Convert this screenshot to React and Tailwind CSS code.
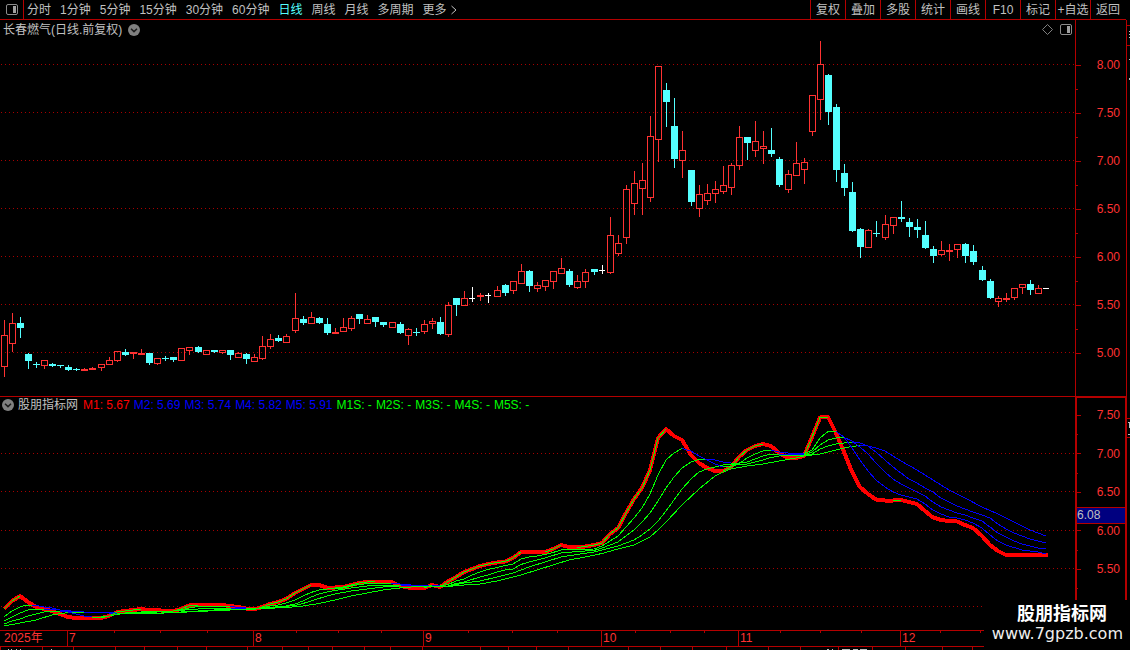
import React from "react";

const PERIODS = ["分时", "1分钟", "5分钟", "15分钟", "30分钟", "60分钟", "日线", "周线", "月线", "多周期"];
const TOOLS = ["复权", "叠加", "多股", "统计", "画线", "F10", "标记", "+自选", "返回"];

const COLORS = { r: "#ff3232", c: "#54ffff", w: "#ffffff" };

// [centre x, kind, high, body top, body bottom, low]
const CANDLES = [
  [4, "r", 320, 335, 367, 377], [12, "r", 313, 323, 344, 352], [20, "c", 317, 323, 328, 338],
  [28, "c", 353, 354, 361, 369], [36, "c", 362, 364, 365, 368], [44, "r", 360, 360, 366, 369],
  [52, "c", 363, 364, 366, 367], [60, "c", 365, 365, 366, 368], [68, "c", 365, 367, 370, 371],
  [76, "c", 368, 369, 370, 371], [84, "r", 368, 369, 371, 371], [92, "r", 367, 368, 370, 370],
  [101, "r", 364, 364, 368, 371], [109, "r", 357, 360, 365, 365], [117, "r", 351, 351, 361, 362],
  [125, "c", 349, 352, 355, 356], [133, "r", 352, 352, 354, 359], [141, "r", 349, 353, 355, 355],
  [149, "c", 353, 353, 363, 365], [157, "r", 358, 358, 364, 365], [165, "c", 356, 358, 359, 361],
  [173, "c", 357, 357, 360, 362], [181, "r", 348, 348, 361, 361], [189, "r", 347, 347, 351, 355],
  [198, "c", 346, 347, 352, 353], [206, "r", 350, 350, 355, 355], [214, "c", 350, 350, 352, 353],
  [222, "r", 350, 350, 353, 354], [230, "c", 350, 350, 355, 360], [238, "r", 352, 353, 358, 358],
  [246, "c", 353, 354, 359, 364], [254, "r", 354, 357, 362, 362], [262, "r", 336, 346, 359, 360],
  [270, "r", 334, 339, 347, 349], [278, "c", 335, 338, 341, 342], [286, "r", 334, 336, 343, 343],
  [295, "r", 293, 318, 331, 333], [303, "c", 316, 319, 323, 325], [311, "r", 312, 317, 324, 324],
  [319, "c", 317, 318, 323, 324], [327, "c", 318, 324, 333, 335], [335, "r", 328, 332, 334, 334],
  [343, "r", 318, 327, 332, 332], [351, "r", 316, 318, 329, 331], [359, "c", 314, 314, 319, 324],
  [367, "r", 315, 319, 324, 324], [375, "c", 317, 317, 322, 327], [383, "c", 322, 322, 325, 327],
  [392, "r", 322, 322, 328, 328], [400, "c", 322, 324, 333, 334], [408, "r", 328, 329, 336, 345],
  [416, "c", 328, 332, 333, 336], [424, "r", 320, 324, 332, 334], [432, "r", 318, 321, 324, 329],
  [440, "c", 317, 322, 334, 335], [448, "r", 302, 305, 335, 337], [456, "c", 298, 298, 305, 316],
  [464, "r", 291, 298, 306, 306], [472, "w", 287, 298, 299, 302], [480, "r", 293, 295, 297, 301],
  [488, "w", 293, 295, 296, 303], [497, "r", 286, 290, 297, 297], [505, "c", 284, 285, 293, 296],
  [513, "r", 281, 281, 291, 294], [521, "r", 264, 271, 284, 284], [529, "c", 270, 271, 286, 292],
  [537, "r", 282, 285, 289, 292], [545, "r", 280, 280, 287, 291], [553, "r", 271, 271, 282, 289],
  [561, "r", 258, 268, 274, 274], [569, "c", 269, 271, 285, 287], [577, "r", 275, 281, 288, 289],
  [585, "r", 269, 272, 282, 288], [594, "c", 269, 269, 272, 275], [602, "w", 265, 270, 271, 274],
  [610, "r", 217, 235, 273, 274], [618, "r", 235, 243, 254, 256], [626, "r", 185, 189, 238, 244],
  [634, "r", 171, 183, 204, 215], [642, "r", 163, 180, 189, 215], [650, "r", 116, 136, 198, 202],
  [658, "r", 66, 66, 140, 162], [666, "c", 83, 90, 102, 127], [674, "c", 98, 126, 159, 168],
  [682, "r", 131, 150, 161, 178], [691, "c", 170, 170, 202, 206], [699, "r", 185, 194, 209, 217],
  [707, "r", 184, 193, 201, 205], [715, "r", 181, 189, 194, 203], [723, "r", 166, 185, 192, 194],
  [731, "r", 163, 165, 188, 195], [739, "r", 126, 137, 166, 170], [747, "c", 137, 137, 143, 160],
  [755, "r", 121, 141, 151, 157], [763, "r", 131, 146, 149, 164], [771, "c", 128, 150, 154, 157],
  [779, "c", 157, 159, 185, 187], [788, "r", 170, 174, 190, 193], [796, "r", 142, 163, 176, 176],
  [804, "r", 158, 162, 170, 184], [812, "r", 95, 95, 132, 136], [820, "r", 41, 64, 100, 120],
  [828, "c", 74, 75, 112, 125], [836, "c", 104, 107, 170, 182], [844, "c", 164, 173, 188, 196],
  [852, "c", 182, 192, 231, 232], [860, "c", 228, 229, 247, 258], [868, "r", 229, 230, 248, 248],
  [876, "c", 221, 233, 234, 237], [885, "r", 215, 224, 238, 240], [893, "r", 217, 217, 226, 234],
  [901, "c", 201, 217, 219, 222], [909, "c", 218, 222, 227, 237], [917, "c", 219, 227, 230, 238],
  [925, "c", 221, 235, 248, 249], [933, "c", 246, 249, 256, 263], [941, "r", 241, 250, 255, 256],
  [949, "r", 244, 250, 252, 261], [957, "r", 244, 244, 250, 258], [965, "c", 243, 244, 256, 263],
  [973, "c", 245, 251, 262, 265], [982, "c", 266, 270, 280, 281], [990, "c", 279, 281, 298, 299],
  [998, "r", 296, 298, 302, 307], [1006, "r", 293, 298, 300, 302], [1014, "r", 288, 288, 298, 300],
  [1022, "r", 284, 284, 288, 294], [1030, "c", 280, 284, 290, 295], [1038, "r", 285, 288, 294, 294],
  [1046, "w", 288, 288, 289, 289],
];

const M1 = [
  [4, 609], [12, 601], [20, 596], [28, 602], [36, 607], [44, 609], [52, 611], [60, 614], [68, 617], [76, 618],
  [101, 618], [109, 616], [117, 612], [125, 611], [133, 610], [141, 609], [149, 610], [157, 610], [165, 611],
  [173, 611], [181, 609], [189, 605.5], [198, 605], [222, 605], [230, 606], [238, 607], [246, 608.5],
  [254, 609.5], [262, 607], [270, 604], [278, 602], [286, 599], [295, 593], [303, 589], [311, 585], [319, 585],
  [327, 587.5], [335, 587.5], [343, 587], [351, 585], [359, 583], [367, 582], [375, 581.5], [383, 582],
  [392, 582], [400, 586], [408, 587.5], [416, 588], [424, 588], [432, 585], [440, 587], [448, 581.5],
  [456, 577], [464, 572], [472, 569], [480, 566], [488, 564], [497, 562.5], [505, 561.5], [513, 558],
  [521, 552], [545, 552], [553, 549], [561, 545], [569, 547], [577, 547.5], [585, 546.5], [594, 545],
  [602, 543], [610, 534], [618, 528], [626, 513], [634, 499], [642, 488], [650, 470], [658, 438], [666, 429],
  [674, 436], [682, 440], [691, 455], [699, 463], [707, 468], [715, 471], [723, 471], [731, 467], [739, 457],
  [747, 450], [755, 446], [763, 444], [771, 446], [779, 453], [788, 458], [796, 458], [804, 456], [812, 437],
  [820, 417.5], [828, 417], [836, 433], [844, 452], [852, 472], [860, 487], [868, 494], [876, 499.5],
  [885, 500.5], [893, 500.5], [901, 500], [909, 502], [917, 504], [925, 511], [933, 517.5], [941, 520],
  [949, 521], [957, 521.5], [965, 525], [973, 528], [982, 536], [990, 545], [998, 551], [1006, 555], [1048, 555],
];

const M2 = [
  [4, 617], [12, 611], [20, 607], [24, 605.5], [32, 605], [36, 605.5], [44, 607], [52, 608], [60, 610],
  [68, 612], [76, 614], [84, 616], [92, 617], [101, 617], [109, 616], [125, 613], [141, 612], [157, 611.5],
  [173, 611], [181, 610], [189, 608], [198, 606.5], [214, 606.5], [230, 606.5], [246, 608], [262, 608],
  [270, 606], [278, 605], [286, 603], [295, 600], [303, 596], [311, 592.5], [319, 590], [327, 589], [343, 588],
  [351, 586], [359, 584.5], [375, 583], [391, 583], [400, 584], [416, 585.5], [432, 586], [440, 586],
  [448, 584.5], [456, 581], [464, 579], [472, 575], [480, 572], [488, 569.5], [497, 567.5], [505, 565.5],
  [513, 564], [521, 559], [529, 557], [537, 556], [545, 554.5], [553, 552.5], [561, 550], [577, 549.5],
  [594, 549], [602, 546], [610, 541], [618, 536], [626, 527], [634, 518], [642, 508], [650, 494], [658, 475],
  [666, 460], [674, 453], [682, 448.5], [691, 451], [699, 456], [707, 460], [715, 464], [723, 467],
  [731, 466.5], [739, 464], [747, 458], [755, 454], [763, 451], [771, 450], [779, 452], [788, 453], [804, 454],
  [812, 450], [820, 438], [828, 431.5], [836, 431.5], [844, 437], [852, 448], [860, 460], [868, 471],
  [876, 480], [885, 487], [893, 492], [901, 495], [909, 497], [917, 499], [925, 504], [933, 510], [941, 514],
  [949, 517], [957, 518], [965, 520], [973, 523], [982, 528], [990, 535], [998, 541], [1006, 545],
  [1014, 547.5], [1022, 550], [1030, 551], [1038, 552], [1046, 554],
];

const M3 = [
  [4, 621], [12, 617], [20, 613], [28, 610], [36, 609], [44, 609], [60, 610], [76, 611.5], [92, 612.5],
  [109, 613], [117, 614], [141, 613], [173, 611], [198, 609], [230, 608], [254, 608.5], [270, 607.5],
  [286, 606], [295, 604], [303, 601], [311, 597], [319, 594], [327, 592], [335, 590.5], [351, 588], [375, 585],
  [400, 585], [440, 586], [448, 586], [456, 583.5], [464, 582], [472, 579.5], [480, 577], [488, 575],
  [497, 572], [505, 570], [513, 569], [521, 564.5], [529, 562], [537, 560], [545, 558], [561, 553],
  [577, 551.5], [594, 550.5], [602, 548], [610, 545], [618, 542], [626, 536], [634, 530], [642, 522],
  [650, 513], [658, 501], [666, 488], [674, 477], [682, 468], [691, 462], [699, 459.5], [707, 459], [715, 460],
  [723, 462], [731, 463], [739, 463], [747, 462], [755, 459], [763, 456], [771, 454], [779, 454], [804, 455],
  [812, 452], [820, 445], [828, 440], [836, 438], [844, 437.5], [852, 441], [860, 447], [868, 454], [876, 463],
  [885, 472], [893, 479], [901, 484], [909, 488], [917, 492], [925, 496], [933, 502], [941, 507], [949, 510],
  [957, 513], [965, 515], [973, 518], [982, 521], [990, 527], [998, 533], [1006, 537], [1014, 541],
  [1022, 544], [1030, 546], [1038, 548], [1046, 549],
];

const M4 = [
  [4, 624], [12, 621], [20, 619], [28, 616], [36, 614], [44, 612], [60, 611.5], [84, 612], [101, 612],
  [117, 613], [141, 614], [173, 612.5], [198, 611], [230, 609], [254, 608.5], [278, 607], [295, 605.5],
  [303, 603.5], [311, 601], [327, 596], [335, 594], [351, 591], [367, 589], [383, 587], [408, 585.5],
  [440, 586], [448, 586], [464, 583], [480, 581], [497, 577], [513, 573], [521, 570], [529, 567], [545, 562],
  [561, 557], [577, 554.5], [594, 552], [610, 548], [618, 546], [634, 540], [642, 535], [650, 529], [658, 521],
  [666, 511], [674, 500], [682, 489], [691, 479], [699, 472], [707, 469], [715, 467], [723, 465], [731, 464],
  [747, 464], [755, 462], [763, 460], [771, 457.5], [779, 456], [788, 455.5], [804, 455], [812, 454],
  [820, 449], [828, 446], [836, 444], [844, 443], [852, 442.5], [860, 443], [868, 446], [876, 452], [885, 460],
  [893, 467], [901, 473], [909, 479], [917, 483], [925, 488], [933, 492], [941, 498], [949, 502], [957, 506],
  [965, 509], [973, 512], [982, 515], [990, 518], [998, 524], [1006, 529], [1014, 533], [1022, 536],
  [1030, 539], [1038, 541], [1046, 543],
];

const M5 = [
  [4, 626], [20, 623], [36, 620], [52, 615], [68, 612.5], [84, 612], [101, 612.5], [133, 613.5], [165, 613],
  [198, 611.5], [230, 610], [254, 609], [286, 607.5], [303, 606], [319, 603.5], [335, 600], [351, 596],
  [367, 593], [383, 590], [400, 588], [416, 586.5], [448, 586.5], [464, 585], [480, 584], [497, 581],
  [521, 575], [537, 570], [553, 565], [569, 560], [585, 557], [602, 553.5], [618, 549], [634, 545], [650, 537],
  [658, 530], [666, 522], [682, 505], [699, 489], [715, 476], [723, 472], [731, 469], [747, 466], [763, 464],
  [779, 461], [796, 458], [804, 456], [812, 455], [820, 454], [828, 452], [836, 450], [844, 448], [852, 446.5],
  [860, 445.5], [868, 446], [876, 448], [885, 451], [893, 456], [901, 461], [917, 470], [933, 480], [949, 490],
  [965, 498], [982, 507], [998, 514], [1014, 522], [1030, 530], [1046, 536],
];

const LEGEND = [
  ["M1: 5.67", "text-[#ff0000]"], ["M2: 5.69", "text-[#0000ff]"], ["M3: 5.74", "text-[#0000ff]"],
  ["M4: 5.82", "text-[#0000ff]"], ["M5: 5.91", "text-[#0000ff]"], ["M1S: -", "text-[#00ff00]"],
  ["M2S: -", "text-[#00ff00]"], ["M3S: -", "text-[#00ff00]"], ["M4S: -", "text-[#00ff00]"],
  ["M5S: -", "text-[#00ff00]"],
];

const TOP_TICKS = [114, 160, 207, 296, 338, 381, 468, 512, 557, 635, 670, 704, 780, 820, 861, 940, 980];
const BOTTOM_TICKS = [
  0, 42, 73, 115, 144, 177, 206, 247, 282, 308, 332, 364, 390, 422, 480, 508, 536, 568, 628, 660, 692, 726,
  768, 800, 838, 872, 905, 942, 972,
];

function Gridlines({ rows }) {
  return rows.map((y) => (
    <line key={y} x1="1" x2="1075" y1={y + 0.5} y2={y + 0.5} stroke="#a80000" strokeDasharray="1 3" />
  ));
}

function Candle({ data }) {
  const [x, kind, high, top, bottom, low] = data;
  const color = COLORS[kind];
  const hollow = kind === "r" && bottom - top > 2;
  return (
    <g fill={color}>
      {top > high && <rect x={x} y={high} width="1" height={top - high} />}
      {low > bottom && <rect x={x} y={bottom} width="1" height={low - bottom} />}
      {hollow ? (
        <rect x={x - 2.5} y={top + 0.5} width="6" height={bottom - top - 1} fill="none" stroke={color} />
      ) : (
        <rect x={x - 3} y={top} width={kind === "w" ? 6 : 7} height={bottom - top} />
      )}
    </g>
  );
}

// Each stretch is coloured by its direction: rising is green, falling is blue.
function TrendLine({ points, risingOnly = false }) {
  return points.slice(1).map(([x, y], i) => {
    const [px, py] = points[i];
    const rising = risingOnly ? y < py : y <= py;
    if (risingOnly && !rising) return null;
    return <line key={x} x1={px} y1={py} x2={x} y2={y} stroke={rising ? "#00ff00" : "#0000ff"} />;
  });
}

function PanelIcon() {
  return (
    <svg width="12" height="11" viewBox="0 0 12 11" fill="none" aria-hidden="true">
      <rect x="0.5" y="0.5" width="11" height="10" rx="1.5" stroke="#8c8c8c" />
      <rect x="7" y="2" width="3" height="7" fill="#a0a0a0" />
    </svg>
  );
}

function RoundChevron() {
  return (
    <svg width="12" height="12" viewBox="0 0 12 12" aria-hidden="true">
      <circle cx="6" cy="6" r="6" fill="#808080" />
      <path d="M3 4.8 L6 7.6 L9 4.8" fill="none" stroke="#1c1c1c" strokeWidth="1.5" />
    </svg>
  );
}

function Toolbar() {
  return (
    <header className="flex h-5 pr-1">
      <div className="flex flex-1 border-b border-[#b40000]">
        <button type="button" aria-label="侧栏" className="flex w-6 shrink-0 items-center justify-center border-r border-[#b40000]">
          <PanelIcon />
        </button>
        <nav className="flex items-center gap-[9px] pl-[3px] whitespace-nowrap">
          {PERIODS.map((p) => (
            <button key={p} type="button" className={p === "日线" ? "text-[#54ffff]" : "text-[#c0c0c0]"}>
              {p}
            </button>
          ))}
          <button type="button" className="flex items-center gap-1">
            更多
            <svg width="6" height="10" viewBox="0 0 6 10" fill="none" stroke="#c0c0c0" aria-hidden="true">
              <path d="M0.5 1 L5 5 L0.5 9" />
            </svg>
          </button>
        </nav>
        <div className="ml-auto flex pr-px whitespace-nowrap">
          {TOOLS.map((t) => (
            <button key={t} type="button" className="flex w-[35px] items-center justify-center border-l border-[#b40000]">
              {t}
            </button>
          ))}
        </div>
      </div>
    </header>
  );
}

function PriceChart() {
  return (
    <section className="flex h-[376px]">
      <div className="relative min-w-0 flex-1">
        <svg className="block h-full w-full" viewBox="0 20 1075 376" preserveAspectRatio="none" shapeRendering="crispEdges" role="img" aria-label="日线">
          <Gridlines rows={[64, 112, 160, 208, 256, 304, 352]} />
          {CANDLES.map((c) => <Candle key={c[0]} data={c} />)}
        </svg>
        <div className="absolute inset-x-0 top-0 flex h-[19px] items-center pr-[3px] pl-[3px]">
          <h1>长春燃气(日线.前复权)</h1>
          <button type="button" aria-label="展开" className="ml-1.5">
            <RoundChevron />
          </button>
          <div className="ml-auto flex items-center gap-[7px]">
            <button type="button" aria-label="标记点">
              <svg width="11" height="11" viewBox="0 0 11 11" fill="none" stroke="#808080" aria-hidden="true">
                <path d="M5.5 0.5 L10.5 5.5 L5.5 10.5 L0.5 5.5 Z" />
              </svg>
            </button>
            <button type="button" aria-label="面板">
              <PanelIcon />
            </button>
          </div>
        </div>
      </div>
      <div className="w-[51px] border-l border-[#b40000] pt-[21px] text-[#ff3232]">
        {["8.00", "7.50", "7.00", "6.50", "6.00", "5.50", "5.00"].map((v, i) => (
          <div key={v} className="relative flex h-12 items-center justify-between pr-1.5">
            <span className="h-px w-[5px] bg-[#b40000]" />
            {v}
            {i > 0 && <span className="absolute top-0 left-0 h-px w-0.5 bg-[#b40000]" />}
          </div>
        ))}
      </div>
      <svg className="h-full w-1 border-l border-[#b40000]" viewBox="1127 20 3 376" preserveAspectRatio="none" shapeRendering="crispEdges" aria-hidden="true">
        <path d="M1127 25.5h3M1127 45.5h3" stroke="#b40000" />
        <path d="M1129.5 31v1M1129.5 34v1M1129.5 37v1M1129.5 59v1M1129.5 78v2" stroke="#c0c0c0" />
      </svg>
    </section>
  );
}

function IndicatorChart() {
  return (
    <section className="flex h-[234px]">
      <div className="relative min-w-0 flex-1 border-t border-[#b40000]">
        <svg className="block h-full w-full" viewBox="0 397 1075 233" preserveAspectRatio="none" shapeRendering="crispEdges" role="img" aria-label="股朋指标网">
          <Gridlines rows={[453, 491, 530, 568, 606]} />
          <polyline points={M1.map((p) => p.join(",")).join(" ")} fill="none" stroke="#ff0000" strokeWidth="4" strokeLinejoin="round" />
          <TrendLine points={M5} />
          <TrendLine points={M4} />
          <TrendLine points={M3} />
          <TrendLine points={M2} />
          <TrendLine points={M1} risingOnly />
        </svg>
        <div className="absolute top-0 left-0 flex h-4 items-center gap-1 pl-0.5 whitespace-nowrap">
          <button type="button" aria-label="展开指标">
            <RoundChevron />
          </button>
          <h2 className="mr-px">股朋指标网</h2>
          {LEGEND.map(([text, color]) => (
            <span key={text} className={color}>{text}</span>
          ))}
        </div>
      </div>
      <div className="relative w-[52px] border-t-2 border-r-2 border-l-2 border-[#b40000] pt-[9px] text-[#ff3232]">
        <div className="flex h-[170px] flex-col justify-between">
          {["7.50", "7.00", "6.50", "6.00", "5.50"].map((v) => (
            <div key={v} className="relative flex h-4 items-center justify-between pr-[5px]">
              <span className="h-px w-1 bg-[#b40000]" />
              {v}
              <span className="absolute top-[27px] left-0 h-px w-px bg-[#b40000]" />
            </div>
          ))}
        </div>
        <output className="absolute inset-x-0 top-[109px] h-[17px] border-y border-[#b40000] bg-[#000080] leading-[15px] text-[#c0c0c0]">6.08</output>
      </div>
      <svg className="h-full w-[3px]" viewBox="1127 396 3 234" preserveAspectRatio="none" shapeRendering="crispEdges" aria-hidden="true">
        <path d="M1127 418.5h3M1127 437.5h3" stroke="#b40000" />
        <path d="M1128 422.5h2M1129 427.5h1M1128 434.5h2M1129.5 423v4" stroke="#c0c0c0" />
      </svg>
    </section>
  );
}

function DateAxis() {
  return (
    <footer className="pr-[55px]">
      <div className="relative grid h-[17px] grid-cols-[67fr_186fr_170fr_178fr_137fr_162fr_175fr] border-y border-[#b40000] text-[#ff3232]">
        {["2025年", "7", "8", "9", "10", "11", "12"].map((m, i) => (
          <span key={m} className={i === 0 ? "pl-1 leading-[15px]" : "border-l border-[#b40000] pl-px leading-[15px]"}>
            {m}
          </span>
        ))}
        <svg className="absolute inset-x-0 top-0 h-0.5 w-full" viewBox="0 0 1075 2" preserveAspectRatio="none" shapeRendering="crispEdges" aria-hidden="true">
          {TOP_TICKS.map((x) => <rect key={x} x={x} y="0" width="1" height="2" fill="#b40000" />)}
        </svg>
      </div>
      <svg className="block h-[3px] w-full" viewBox="0 0 1075 3" preserveAspectRatio="none" shapeRendering="crispEdges" aria-hidden="true">
        {BOTTOM_TICKS.map((x) => <rect key={x} x={x} y="0" width="1" height="3" fill="#b40000" />)}
        <path d="M8 2.5h1M11 2.5h1M16 2.5h1M20 2.5h1M51 2.5h1M827 2.5h2M832 2.5h1M842 2.5h8M853 2.5h5M860 2.5h7" stroke="#c0c0c0" />
      </svg>
    </footer>
  );
}

export default function App() {
  return (
    <main className="relative flex min-h-screen flex-col overflow-hidden bg-black font-['Liberation_Sans','Noto_Sans_CJK_SC',sans-serif] text-[12px] leading-4 text-[#c0c0c0]">
      <Toolbar />
      <PriceChart />
      <IndicatorChart />
      <DateAxis />
      <aside className="absolute right-0 bottom-0 flex h-[50px] w-[146px] flex-col items-end bg-black pt-1 pr-[7px] whitespace-nowrap text-white">
        <span className="pr-4 text-[18px] leading-5 font-bold">股朋指标网</span>
        <span className="font-['DejaVu_Sans',sans-serif] text-[16px] leading-5 text-[#eeeeee]">www.7gpzb.com</span>
      </aside>
    </main>
  );
}
